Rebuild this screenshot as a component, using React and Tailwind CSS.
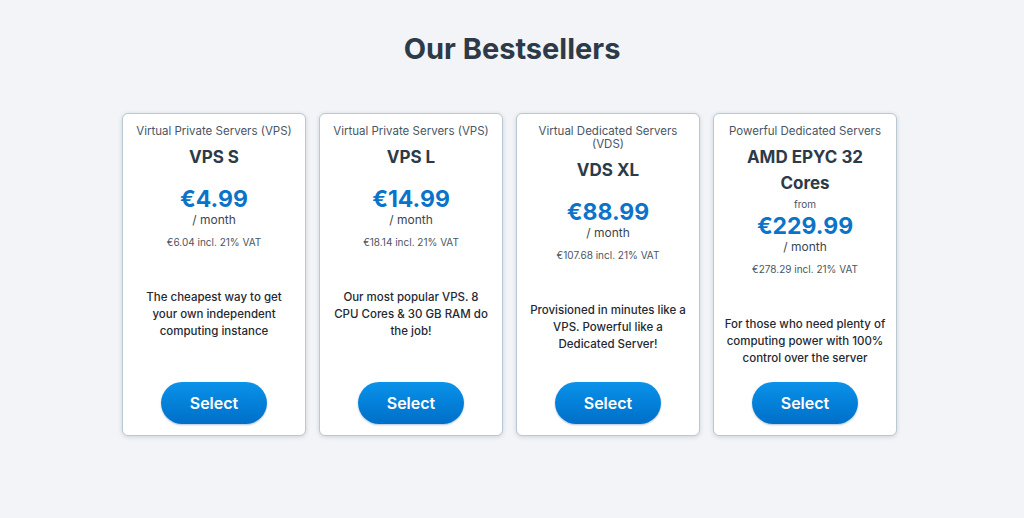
const plans = [
  {
    category: 'Virtual Private Servers (VPS)',
    name: 'VPS S',
    price: '€4.99',
    vat: '€6.04 incl. 21% VAT',
    text: 'The cheapest way to get your own independent computing instance',
  },
  {
    category: 'Virtual Private Servers (VPS)',
    name: 'VPS L',
    price: '€14.99',
    vat: '€18.14 incl. 21% VAT',
    text: 'Our most popular VPS. 8 CPU Cores & 30 GB RAM do the job!',
  },
  {
    category: 'Virtual Dedicated Servers (VDS)',
    name: 'VDS XL',
    price: '€88.99',
    vat: '€107.68 incl. 21% VAT',
    text: 'Provisioned in minutes like a VPS. Powerful like a Dedicated Server!',
  },
  {
    category: 'Powerful Dedicated Servers',
    name: 'AMD EPYC 32 Cores',
    from: true,
    price: '€229.99',
    vat: '€278.29 incl. 21% VAT',
    text: 'For those who need plenty of computing power with 100% control over the server',
  },
]

function PlanCard({ plan }) {
  return (
    <div className="w-[184px] h-[323px] bg-white border border-[#b9c8d2] rounded-md shadow-[0_1px_4px_rgba(40,60,80,0.18)] flex flex-col items-center px-[8px] pt-[11px] pb-[11px] text-center">
      <p className="text-[11.5px] leading-[13px] text-[#4b5563]">{plan.category}</p>
      <h3 className="mt-[6px] text-[17px] leading-[26px] font-bold text-[#2d3a48] px-3">{plan.name}</h3>
      {plan.from && <p className="text-[10px] leading-[12px] text-[#4b5563] mt-[2px]">from</p>}
      <p className={`${plan.from ? 'mt-[2px]' : 'mt-[15px]'} text-[23px] leading-[28px] font-bold text-[#0b74c9]`}>{plan.price}</p>
      <p className="text-[12px] leading-[14px] text-[#3b4550]">/ month</p>
      <p className="mt-[9px] text-[10px] leading-[12px] text-[#4b5563]">{plan.vat}</p>
      <p className="mt-[41px] text-[11.5px] leading-[17px] font-medium text-[#1f2933] px-[2px]">{plan.text}</p>
      <button className="mt-auto shrink-0 w-[106px] h-[42px] rounded-full bg-gradient-to-b from-[#0b92ea] to-[#006fc8] text-white text-[16px] font-semibold shadow-[0_1px_2px_rgba(0,60,120,0.3)]">
        Select
      </button>
    </div>
  )
}

export default function App() {
  return (
    <div className="min-h-[518px] bg-[#f2f4f7] flex flex-col items-center pt-[31px] font-['Inter',sans-serif]">
      <h2 className="text-[29px] leading-[36px] font-bold text-[#2d3a48]">Our Bestsellers</h2>
      <div className="mt-[46px] flex gap-[13px] mr-[5px]">
        {plans.map((p) => (
          <PlanCard key={p.name} plan={p} />
        ))}
      </div>
    </div>
  )
}
